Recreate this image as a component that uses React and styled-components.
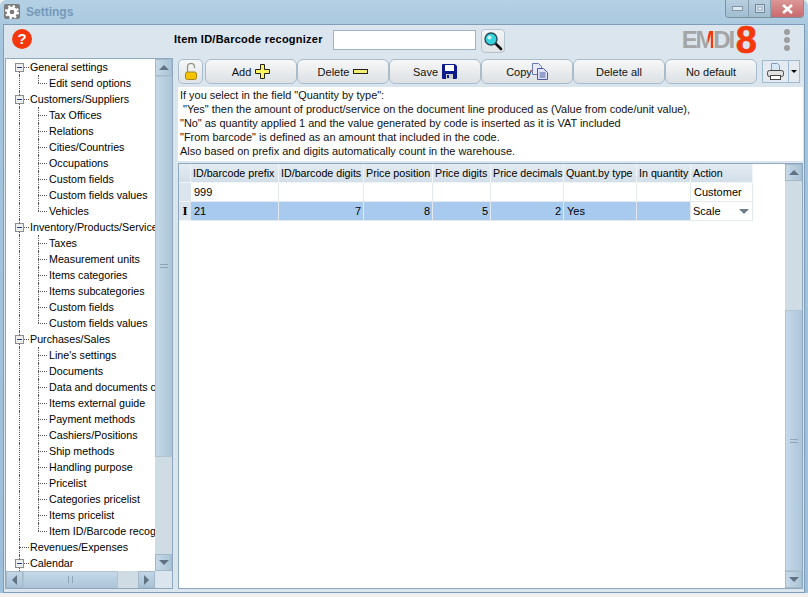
import styled, { createGlobalStyle } from 'styled-components';

const GlobalStyle = createGlobalStyle`
  html, body {
    margin: 0;
    padding: 0;
    width: 808px;
    height: 597px;
    overflow: hidden;
    background: #f0f0f0;
  }
  * { box-sizing: border-box; }
`;

const Frame = styled.div`
  width: 808px;
  height: 593px;
  display: flex;
  flex-direction: column;
  background: linear-gradient(180deg, #b4d0e4 0, #a4c5dd 40px, #9dbfd9 100%);
  border-radius: 6px 6px 0 0;
  font-family: "Liberation Sans", Arial, sans-serif;
  font-size: 11px;
  color: #000;
`;

const TitleBar = styled.div`
  height: 24px;
  flex: none;
  display: flex;
  align-items: flex-start;
  padding-left: 4px;
`;

const AppBadge = styled.div`
  width: 16px;
  height: 15px;
  margin-top: 4px;
  background: #7b7b7b;
  border-radius: 2px;
  display: flex;
  align-items: center;
  justify-content: center;
`;

const TitleText = styled.div`
  margin: 5px 0 0 6px;
  font-size: 12px;
  font-weight: bold;
  color: #7599ba;
`;

const WinButtons = styled.div`
  margin-left: auto;
  margin-right: 4px;
  display: flex;
  height: 18px;
  border: 1px solid #7f8f9c;
  border-top: none;
  border-radius: 0 0 4px 4px;
  overflow: hidden;
`;

const WinButton = styled.div`
  width: ${(p) => (p.$close ? '33px' : '22px')};
  background: ${(p) => (p.$close ? 'linear-gradient(180deg,#dc9797,#c96a6d)' : 'linear-gradient(180deg,#b8cfdf,#a0bdd1)')};
  border-left: ${(p) => (p.$first ? 'none' : '1px solid #8aa0b0')};
  display: flex;
  align-items: center;
  justify-content: center;
`;

const Body = styled.div`
  flex: 1;
  margin: 0 3px;
  min-height: 0;
  display: flex;
  flex-direction: column;
  background: #dbe5ee;
  border: 1px solid #7f9db9;
  padding: 0 1px 3px 1px;
`;

const TopBar = styled.div`
  height: 33px;
  flex: none;
  display: flex;
  align-items: flex-start;
`;

const HelpIcon = styled.div`
  width: 20px;
  height: 20px;
  margin: 4px 0 0 7px;
  border-radius: 50%;
  background: #f4380c;
  color: #fff;
  font-weight: bold;
  font-size: 15px;
  line-height: 20px;
  text-align: center;
`;

const RecognizerLabel = styled.div`
  margin: 8px 0 0 142px;
  font-weight: bold;
  font-size: 11px;
  letter-spacing: 0.24px;
  width: 159px;
  white-space: nowrap;
`;

const SearchInput = styled.input`
  width: 143px;
  height: 20px;
  margin: 5px 5px 0 0;
  border: 1px solid #9fb3c5;
  background: #fff;
  padding: 0 3px;
  outline: none;
`;

const SearchButton = styled.div`
  width: 24px;
  height: 24px;
  margin-top: 4px;
  border: 1px solid #b3c3d2;
  border-radius: 4px;
  background: linear-gradient(180deg, #f4f5f6, #dfe3e6);
  display: flex;
  align-items: center;
  justify-content: center;
`;

const Logo = styled.div`
  margin-left: auto;
  height: 30px;
  display: flex;
  align-items: center;
  font-weight: bold;
  letter-spacing: -2.2px;
  line-height: 1;
`;

const LogoLetters = styled.span`
  font-size: 24px;
  color: #a5a5a5;
`;

const LogoSplit = styled.span`
  font-size: 24px;
  background: linear-gradient(90deg, #a5a5a5 70%, #f4380c 70%);
  -webkit-background-clip: text;
  background-clip: text;
  color: transparent;
`;

const LogoEight = styled.span`
  font-size: 38px;
  color: #f4380c;
  letter-spacing: 0;
  margin-left: 3px;
  -webkit-text-stroke: 0.6px #f4380c;
`;

const DotsColumn = styled.div`
  margin: 4px 13px 0 27px;
  display: flex;
  flex-direction: column;
  gap: 2px;
`;

const Dot = styled.div`
  width: 6px;
  height: 6px;
  border-radius: 50%;
  background: #9d9d9d;
`;

const Main = styled.div`
  flex: 1;
  min-height: 0;
  display: flex;
  gap: 5px;
`;

const TreePanel = styled.div`
  width: 168px;
  flex: none;
  display: grid;
  grid-template-columns: 1fr 17px;
  grid-template-rows: 1fr 17px;
  border: 1px solid #8ea9bf;
  background: #dbe5ee;
  overflow: hidden;
`;

const TreeList = styled.div`
  background: #fff;
  overflow: hidden;
  min-width: 0;
`;

const TreeRow = styled.div`
  position: relative;
  height: 16px;
  line-height: 16px;
  font-size: 10.7px;
  padding-left: ${(p) => (p.$level === 0 ? '24px' : '43px')};
  white-space: nowrap;
  overflow: hidden;
`;

const VLine = styled.div`
  position: absolute;
  left: ${(p) => p.$x}px;
  top: ${(p) => p.$top ?? 0}px;
  bottom: ${(p) => p.$bottom ?? 0}px;
  border-left: 1px dotted #555;
`;

const HLine = styled.div`
  position: absolute;
  left: ${(p) => p.$x}px;
  top: 8px;
  width: ${(p) => p.$w}px;
  border-top: 1px dotted #555;
`;

const Expander = styled.div`
  position: absolute;
  left: 9px;
  top: 4px;
  width: 9px;
  height: 9px;
  border: 1px solid #8c8c8c;
  background: #eee;
  &::after {
    content: '';
    position: absolute;
    left: 1px;
    top: 3px;
    width: 5px;
    height: 1px;
    background: #1f3f7a;
  }
`;

const ScrollTrack = styled.div`
  display: flex;
  flex: none;
  width: ${(p) => p.$width || 'auto'};
  flex-direction: ${(p) => (p.$horizontal ? 'row' : 'column')};
  background: #d0dce4;
  min-width: 0;
  min-height: 0;
`;

const ScrollButton = styled.div`
  flex: none;
  width: ${(p) => (p.$horizontal ? '17px' : 'auto')};
  height: ${(p) => (p.$horizontal ? 'auto' : '17px')};
  background: ${(p) => (p.$horizontal
    ? 'linear-gradient(180deg,#c2d6e5,#a9c3d6)'
    : 'linear-gradient(90deg,#c6d9e7,#aac4d7)')};
  border: 1px solid #a3b9ca;
  display: flex;
  align-items: center;
  justify-content: center;
`;

const Arrow = styled.div`
  width: 0;
  height: 0;
  ${(p) => p.$dir === 'up' && 'border-left:5px solid transparent;border-right:5px solid transparent;border-bottom:5px solid #617282;'}
  ${(p) => p.$dir === 'down' && 'border-left:5px solid transparent;border-right:5px solid transparent;border-top:5px solid #617282;'}
  ${(p) => p.$dir === 'left' && 'border-top:5px solid transparent;border-bottom:5px solid transparent;border-right:5px solid #617282;'}
  ${(p) => p.$dir === 'right' && 'border-top:5px solid transparent;border-bottom:5px solid transparent;border-left:5px solid #617282;'}
`;

const ScrollThumb = styled.div`
  flex: ${(p) => p.$grow};
  background: ${(p) => (p.$horizontal
    ? 'linear-gradient(180deg,#c5d9e8,#adc6d9)'
    : 'linear-gradient(90deg,#c5d9e8,#adc6d9)')};
  border: 1px solid #b0c4d3;
  display: flex;
  align-items: center;
  justify-content: center;
`;

const ScrollGap = styled.div`
  flex: ${(p) => p.$grow};
`;

const Grip = styled.div`
  width: ${(p) => (p.$horizontal ? '5px' : '8px')};
  height: ${(p) => (p.$horizontal ? '7px' : '4px')};
  ${(p) => (p.$horizontal
    ? 'border-left:1px solid #8ea5b7;border-right:1px solid #8ea5b7;'
    : 'border-top:1px solid #8ea5b7;border-bottom:1px solid #8ea5b7;')}
`;

const Corner = styled.div`
  background: #dbe5ee;
`;

const RightPane = styled.div`
  flex: 1;
  min-width: 0;
  display: flex;
  flex-direction: column;
`;

const Toolbar = styled.div`
  height: 29px;
  flex: none;
  padding-top: 1px;
  display: flex;
  align-items: flex-start;
`;

const LockButton = styled.div`
  width: 25px;
  height: 25px;
  margin-right: 2px;
  border: 1px solid #a9bccb;
  border-radius: 5px;
  background: linear-gradient(180deg, #f5f6f7, #dfe3e6);
  display: flex;
  align-items: center;
  justify-content: center;
`;

const ToolButton = styled.div`
  width: 92px;
  height: 25px;
  border: 1px solid #a9bccb;
  border-radius: 6px;
  background: linear-gradient(180deg, #f6f7f8, #dde1e4);
  display: flex;
  align-items: center;
  justify-content: center;
  gap: ${(p) => p.$gap ?? 4}px;
  color: #111;
`;

const PrintGroup = styled.div`
  margin: 1px 0 0 5px;
  height: 23px;
  display: flex;
  border: 1px solid #9fbbd0;
  background: #e4eaef;
`;

const PrintPart = styled.div`
  width: ${(p) => p.$w}px;
  display: flex;
  align-items: center;
  justify-content: center;
  & + & {
    border-left: 1px solid #9fbbd0;
  }
`;

const SmallCaret = styled.div`
  width: 0;
  height: 0;
  border-left: 3px solid transparent;
  border-right: 3px solid transparent;
  border-top: 3px solid #000;
`;

const InfoBox = styled.div`
  height: 74px;
  flex: none;
  background: #fff;
  padding: 1px 2px 0;
  font-size: 10.94px;
  line-height: 14px;
  white-space: pre;
  color: #111;
`;

const GridWrap = styled.div`
  flex: 1;
  min-height: 0;
  margin-top: 2px;
  display: flex;
  border: 1px solid #8ea9bf;
  background: #fff;
`;

const GridArea = styled.div`
  flex: 1;
  min-width: 0;
`;

const Table = styled.div`
  display: grid;
  width: 574px;
  grid-template-columns: 12px 88px 85px 69px 58px 73px 73px 54px 62px;
  grid-auto-rows: 19px;
`;

const HeadCell = styled.div`
  background: linear-gradient(180deg, #e4ebf1, #d3dfe9);
  border-right: 1px solid #f2f5f8;
  border-bottom: 1px solid #f2f5f8;
  display: flex;
  align-items: center;
  padding-left: 2px;
  font-size: 10.7px;
  white-space: nowrap;
  overflow: hidden;
`;

const RowHead = styled.div`
  background: #dbe5ee;
  border-bottom: 1px solid #f2f5f8;
  display: flex;
  align-items: center;
  justify-content: center;
  font-family: "Liberation Serif", serif;
  font-weight: bold;
  font-size: 13px;
`;

const Cell = styled.div`
  background: ${(p) => (p.$selected ? '#a7caee' : '#fff')};
  border-right: 1px solid #e3e9ee;
  border-bottom: 1px solid #e3e9ee;
  display: flex;
  align-items: center;
  justify-content: ${(p) => (p.$number ? 'flex-end' : 'flex-start')};
  padding: 0 2px 0 3px;
  white-space: nowrap;
`;

const ComboCell = styled(Cell)`
  background: #fff;
  justify-content: space-between;
  padding-left: 2px;
`;

const ComboArrow = styled.div`
  width: 0;
  height: 0;
  margin-right: 1px;
  border-left: 5px solid transparent;
  border-right: 5px solid transparent;
  border-top: 5px solid #6d7c8a;
`;

const treeItems = [
  { level: 0, label: 'General settings', open: true, first: true },
  { level: 1, label: 'Edit send options', last: true },
  { level: 0, label: 'Customers/Suppliers', open: true },
  { level: 1, label: 'Tax Offices' },
  { level: 1, label: 'Relations' },
  { level: 1, label: 'Cities/Countries' },
  { level: 1, label: 'Occupations' },
  { level: 1, label: 'Custom fields' },
  { level: 1, label: 'Custom fields values' },
  { level: 1, label: 'Vehicles', last: true },
  { level: 0, label: 'Inventory/Products/Services', open: true },
  { level: 1, label: 'Taxes' },
  { level: 1, label: 'Measurement units' },
  { level: 1, label: 'Items categories' },
  { level: 1, label: 'Items subcategories' },
  { level: 1, label: 'Custom fields' },
  { level: 1, label: 'Custom fields values', last: true },
  { level: 0, label: 'Purchases/Sales', open: true },
  { level: 1, label: "Line's settings" },
  { level: 1, label: 'Documents' },
  { level: 1, label: 'Data and documents check' },
  { level: 1, label: 'Items external guide' },
  { level: 1, label: 'Payment methods' },
  { level: 1, label: 'Cashiers/Positions' },
  { level: 1, label: 'Ship methods' },
  { level: 1, label: 'Handling purpose' },
  { level: 1, label: 'Pricelist' },
  { level: 1, label: 'Categories pricelist' },
  { level: 1, label: 'Items pricelist' },
  { level: 1, label: 'Item ID/Barcode recognizer', last: true },
  { level: 0, label: 'Revenues/Expenses' },
  { level: 0, label: 'Calendar', open: true },
];

const toolButtons = [
  { label: 'Add', icon: 'plus' },
  { label: 'Delete', icon: 'minus' },
  { label: 'Save', icon: 'disk' },
  { label: 'Copy', icon: 'copy', gap: 0 },
  { label: 'Delete all' },
  { label: 'No default' },
];

const infoText = [
  'If you select in the field "Quantity by type":',
  ' "Yes" then the amount of product/service on the document line produced as (Value from code/unit value),',
  '"No" as quantity applied 1 and the value generated by code is inserted as it is VAT included',
  '"From barcode" is defined as an amount that included in the code.',
  'Also based on prefix and digits automatically count in the warehouse.',
].join('\n');

const columns = [
  'ID/barcode prefix',
  'ID/barcode digits',
  'Price position',
  'Price digits',
  'Price decimals',
  'Quant.by type',
  'In quantity',
  'Action',
];

function GearIcon() {
  return (
    <svg width="14" height="14" viewBox="0 0 24 24">
      <circle cx="12" cy="12" r="6.5" fill="none" stroke="#fff" strokeWidth="5" />
      <circle cx="12" cy="12" r="10" fill="none" stroke="#fff" strokeWidth="4" strokeDasharray="3.9 3.95" />
    </svg>
  );
}

function SearchIcon() {
  return (
    <svg width="20" height="20" viewBox="0 0 20 20">
      <line x1="12" y1="12" x2="18" y2="18" stroke="#111" strokeWidth="2.6" strokeLinecap="round" />
      <circle cx="8" cy="8" r="6" fill="#35d3dc" stroke="#2b4a58" strokeWidth="1.4" />
      <circle cx="6.5" cy="6.5" r="2" fill="#c5f5f7" />
    </svg>
  );
}

function LockIcon() {
  return (
    <svg width="12" height="17" viewBox="0 0 12 17">
      <path d="M2.5 9V4a3.5 3.5 0 0 1 7 0v1" fill="none" stroke="#8f8f80" strokeWidth="1.2" />
      <rect x="0.5" y="9" width="11" height="7.5" rx="2" fill="#f4c400" stroke="#a5841a" />
    </svg>
  );
}

function ToolIcon({ name }) {
  if (name === 'plus') {
    return (
      <svg width="15" height="15" viewBox="0 0 15 15">
        <path d="M5.5.5h4v5h5v4h-5v5h-4v-5h-5v-4h5z" fill="#fff45c" stroke="#222" />
      </svg>
    );
  }
  if (name === 'minus') {
    return (
      <svg width="15" height="5" viewBox="0 0 15 5">
        <rect x="0.5" y="0.5" width="14" height="4" fill="#f5ee70" stroke="#222" />
      </svg>
    );
  }
  if (name === 'disk') {
    return (
      <svg width="15" height="15" viewBox="0 0 15 15">
        <path d="M0 1a1 1 0 0 1 1-1h12l2 2v12a1 1 0 0 1-1 1H1a1 1 0 0 1-1-1z" fill="#0c1a8c" />
        <rect x="3" y="1" width="9" height="6" fill="#fff" />
        <rect x="4" y="10" width="7" height="5" fill="#d0d0d0" />
        <rect x="5" y="11" width="2" height="3" fill="#0c1a8c" />
      </svg>
    );
  }
  return (
    <svg width="16" height="17" viewBox="0 0 16 17">
      <path d="M.5.5h6l3 3v8h-9z" fill="#e6ebf7" stroke="#6d78b5" />
      <path d="M5.5 5.5h6l4 4v7h-10z" fill="#dfe5f7" stroke="#4d5aa5" />
      <path d="M7.5 10h6M7.5 12h6M7.5 14h6" stroke="#4d5aa5" />
    </svg>
  );
}

function PrinterIcon() {
  return (
    <svg width="17" height="17" viewBox="0 0 17 17">
      <path d="M4.5.5h6l2 2v6h-8z" fill="#d8e8f6" stroke="#7b9cc0" />
      <rect x="0.5" y="7.5" width="16" height="6" rx="2" fill="#e2e2e2" stroke="#444" />
      <rect x="3.5" y="12.5" width="10" height="4" fill="#fff" stroke="#444" />
    </svg>
  );
}

function TreeNode({ item }) {
  const { level, label, open, first, last } = item;
  return (
    <TreeRow $level={level}>
      <VLine $x={13} $top={first ? 8 : 0} />
      {level === 0 ? (
        <>
          <HLine $x={13} $w={10} />
          {open && <Expander />}
        </>
      ) : (
        <>
          <VLine $x={32} $bottom={last ? 8 : 0} />
          <HLine $x={32} $w={9} />
        </>
      )}
      {label}
    </TreeRow>
  );
}

export default function App() {
  return (
    <>
      <GlobalStyle />
      <Frame>
        <TitleBar>
          <AppBadge>
            <GearIcon />
          </AppBadge>
          <TitleText>Settings</TitleText>
          <WinButtons>
            <WinButton $first>
              <svg width="11" height="6" viewBox="0 0 11 6">
                <rect x="0.5" y="0.5" width="10" height="4" fill="#dfe8ef" stroke="#8296a6" />
              </svg>
            </WinButton>
            <WinButton>
              <svg width="10" height="9" viewBox="0 0 10 9">
                <rect x="0.5" y="0.5" width="9" height="8" fill="#c9dbe7" stroke="#74899a" />
                <rect x="3" y="3" width="4" height="3" fill="#eef4f8" stroke="#74899a" strokeWidth="0.6" />
              </svg>
            </WinButton>
            <WinButton $close>
              <svg width="13" height="10" viewBox="0 0 13 10">
                <path d="M2 1l9 8M11 1L2 9" stroke="#fff" strokeWidth="2.6" />
              </svg>
            </WinButton>
          </WinButtons>
        </TitleBar>
        <Body>
          <TopBar>
            <HelpIcon>?</HelpIcon>
            <RecognizerLabel>Item ID/Barcode recognizer</RecognizerLabel>
            <SearchInput />
            <SearchButton>
              <SearchIcon />
            </SearchButton>
            <Logo>
              <LogoLetters>E</LogoLetters>
              <LogoSplit>M</LogoSplit>
              <LogoLetters>DI</LogoLetters>
              <LogoEight>8</LogoEight>
            </Logo>
            <DotsColumn>
              <Dot />
              <Dot />
              <Dot />
            </DotsColumn>
          </TopBar>
          <Main>
            <TreePanel>
              <TreeList>
                {treeItems.map((item, i) => (
                  <TreeNode key={i} item={item} />
                ))}
              </TreeList>
              <ScrollTrack>
                <ScrollButton>
                  <Arrow $dir="up" />
                </ScrollButton>
                <ScrollThumb $grow={3.9}>
                  <Grip />
                </ScrollThumb>
                <ScrollGap $grow={1} />
                <ScrollButton>
                  <Arrow $dir="down" />
                </ScrollButton>
              </ScrollTrack>
              <ScrollTrack $horizontal>
                <ScrollButton $horizontal>
                  <Arrow $dir="left" />
                </ScrollButton>
                <ScrollThumb $horizontal $grow={4.75}>
                  <Grip $horizontal />
                </ScrollThumb>
                <ScrollGap $grow={1} />
                <ScrollButton $horizontal>
                  <Arrow $dir="right" />
                </ScrollButton>
              </ScrollTrack>
              <Corner />
            </TreePanel>
            <RightPane>
              <Toolbar>
                <LockButton>
                  <LockIcon />
                </LockButton>
                {toolButtons.map((b) => (
                  <ToolButton key={b.label} $gap={b.gap}>
                    {b.label}
                    {b.icon && <ToolIcon name={b.icon} />}
                  </ToolButton>
                ))}
                <PrintGroup>
                  <PrintPart $w={25}>
                    <PrinterIcon />
                  </PrintPart>
                  <PrintPart $w={11}>
                    <SmallCaret />
                  </PrintPart>
                </PrintGroup>
              </Toolbar>
              <InfoBox>{infoText}</InfoBox>
              <GridWrap>
                <GridArea>
                  <Table>
                    <HeadCell />
                    {columns.map((c) => (
                      <HeadCell key={c}>{c}</HeadCell>
                    ))}
                    <RowHead />
                    <Cell>999</Cell>
                    <Cell />
                    <Cell />
                    <Cell />
                    <Cell />
                    <Cell />
                    <Cell />
                    <Cell>Customer</Cell>
                    <RowHead>I</RowHead>
                    <Cell $selected>21</Cell>
                    <Cell $selected $number>7</Cell>
                    <Cell $selected $number>8</Cell>
                    <Cell $selected $number>5</Cell>
                    <Cell $selected $number>2</Cell>
                    <Cell $selected>Yes</Cell>
                    <Cell $selected />
                    <ComboCell>
                      Scale
                      <ComboArrow />
                    </ComboCell>
                  </Table>
                </GridArea>
                <ScrollTrack $width="17px">
                  <ScrollButton>
                    <Arrow $dir="up" />
                  </ScrollButton>
                  <ScrollGap $grow={1} />
                  <ScrollThumb $grow={2}>
                    <Grip />
                  </ScrollThumb>
                  <ScrollButton>
                    <Arrow $dir="down" />
                  </ScrollButton>
                </ScrollTrack>
              </GridWrap>
            </RightPane>
          </Main>
        </Body>
      </Frame>
    </>
  );
}
